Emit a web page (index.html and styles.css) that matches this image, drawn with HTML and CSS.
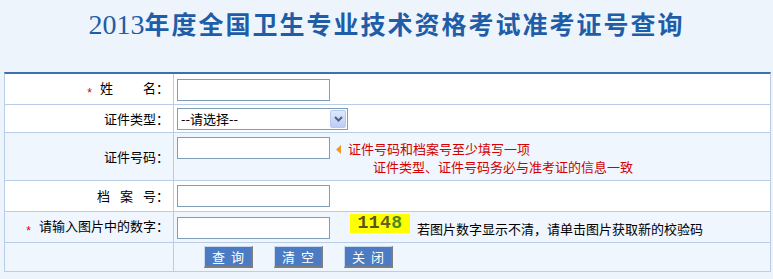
FILE: index.html
```html
<!DOCTYPE html>
<html lang="zh-CN">
<head>
<meta charset="utf-8">
<title>2013年度全国卫生专业技术资格考试准考证号查询</title>
<link rel="stylesheet" href="styles.css">
</head>
<body>
<div class="header">
  <h1 class="title"><span class="year">2013</span>年度全国卫生专业技术资格考试准考证号查询</h1>
</div>
<table class="form">
  <tr class="r1 white">
    <td class="lbl"><span class="req">*</span>姓<span class="gap-w"></span>名：</td>
    <td class="val"><div class="line"><input class="txt" type="text"></div></td>
  </tr>
  <tr class="r2 white">
    <td class="lbl">证件类型：</td>
    <td class="val">
      <div class="line">
        <div class="select">
          <span class="sel-text">--请选择--</span>
          <span class="sel-btn"><svg width="9" height="6" viewBox="0 0 9 6"><path d="M1 1 L4.5 4.5 L8 1" fill="none" stroke="#4d6185" stroke-width="2"/></svg></span>
        </div>
      </div>
    </td>
  </tr>
  <tr class="r3 light">
    <td class="lbl">证件号码：</td>
    <td class="val">
      <div class="line">
        <input class="txt" type="text">
        <div class="hint">
          <div class="hint-1"><svg class="tri" width="5" height="9" viewBox="0 0 5 9"><path d="M5 0 L0 4.5 L5 9 Z" fill="#f19a1c"/></svg><span>证件号码和档案号至少填写一项</span></div>
          <div class="hint-2">证件类型、证件号码务必与准考证的信息一致</div>
        </div>
      </div>
    </td>
  </tr>
  <tr class="r4 white">
    <td class="lbl">档<span class="gap-s"></span>案<span class="gap-s"></span>号：</td>
    <td class="val"><div class="line"><input class="txt" type="text"></div></td>
  </tr>
  <tr class="r5 light">
    <td class="lbl"><span class="req">*</span>请输入图片中的数字：</td>
    <td class="val">
      <div class="line">
        <input class="txt" type="text">
        <div class="captcha"><span class="d1">1</span><span class="d1">1</span><span class="d2">4</span><span class="d3">8</span></div>
        <span class="cap-tip">若图片数字显示不清，请单击图片获取新的校验码</span>
      </div>
    </td>
  </tr>
  <tr class="r6 light">
    <td class="lbl"></td>
    <td class="val">
      <div class="btns">
        <button class="btn" type="button">查询</button>
        <button class="btn" type="button">清空</button>
        <button class="btn" type="button">关闭</button>
      </div>
    </td>
  </tr>
</table>
</body>
</html>
```

FILE: styles.css
```css
html, body {
  margin: 0;
  padding: 0;
  background: #eef4fc;
}
body {
  font-family: "Noto Sans CJK SC", "Liberation Sans", sans-serif;
  font-size: 12px;
  color: #000;
}
.header {
  height: 72px;
  box-sizing: border-box;
  padding-top: 5px;
}
.title {
  margin: 0;
  text-align: center;
  font-size: 25px;
  line-height: 36px;
  letter-spacing: 2px;
  font-weight: 700;
  color: #1f5da6;
}
.year {
  font-family: "Liberation Serif", serif;
  font-size: 28px;
  letter-spacing: 0;
  font-weight: 400;
}
.form {
  margin-left: 4px;
  width: 767px;
  border-collapse: separate;
  border-spacing: 0;
  border-left: 1px solid #b9cce8;
  border-right: 1px solid #b9cce8;
  border-top: 2px solid #3e70b3;
}
.form td {
  border-bottom: 1px solid #b9cce8;
  box-sizing: border-box;
  padding: 0;
}
.white td { background: #fff; }
.light td { background: #f0f6fe; }
.lbl {
  width: 169px;
  border-right: 1px solid #b9cce8;
  text-align: right;
  vertical-align: middle;
  padding-right: 4px !important;
  white-space: nowrap;
  font-size: 13px;
  line-height: 16px;
}
.gap-w {
  display: inline-block;
  width: 30px;
}
.gap-s {
  display: inline-block;
  width: 10px;
}
.val {
  vertical-align: top;
  padding-left: 3px !important;
}
.r1 td { height: 31px; }
.r2 td { height: 28px; }
.r3 td { height: 48px; }
.r4 td { height: 31px; }
.r5 td { height: 31px; }
.r6 td { height: 29px; }
.r1 .val { padding-top: 5px !important; }
.r2 .val { padding-top: 3px !important; }
.r3 .val { padding-top: 4px !important; }
.r4 .val { padding-top: 4px !important; }
.r5 .val { padding-top: 5px !important; }
.r6 .val { padding-top: 3px !important; }
.req {
  display: inline-block;
  color: #d40000;
  font-family: "Liberation Sans", sans-serif;
  font-size: 12px;
  line-height: 12px;
  vertical-align: -4px;
  margin-right: 8px;
}
.line {
  display: flex;
  align-items: flex-start;
}
.txt {
  width: 153px;
  height: 22px;
  box-sizing: border-box;
  border: 1px solid #7f9db9;
  background: #fff;
  margin: 0;
  padding: 0 2px;
}
.select {
  width: 171px;
  height: 22px;
  box-sizing: border-box;
  border: 1px solid #7f9db9;
  background: #fff;
  display: flex;
  align-items: center;
  justify-content: space-between;
  padding: 0 1px 0 3px;
}
.sel-text {
  font-size: 13px;
  line-height: 16px;
}
.sel-btn {
  width: 16px;
  height: 18px;
  box-sizing: border-box;
  border: 1px solid #b7c9ef;
  border-radius: 2px;
  background: linear-gradient(#dde8fd, #bccdf4);
  display: flex;
  align-items: center;
  justify-content: center;
}
.hint {
  margin-left: 6px;
  margin-top: 3px;
  color: #d20000;
  font-size: 13px;
  line-height: 18px;
}
.hint-1 {
  display: flex;
  align-items: center;
}
.tri {
  margin-right: 7px;
}
.hint-2 {
  padding-left: 37px;
}
.captcha {
  margin-left: 20px;
  margin-top: -3px;
  width: 60px;
  height: 19px;
  background: #ffff00;
  font-family: "Liberation Mono", monospace;
  font-weight: 700;
  font-size: 18px;
  line-height: 19px;
  letter-spacing: 0.5px;
  text-align: center;
}
.d1 { color: #58561c; }
.d2 { color: #62621e; }
.d3 { color: #4a8a20; }
.cap-tip {
  margin-left: 7px;
  margin-top: 4px;
  font-size: 13px;
  line-height: 16px;
}
.btns {
  display: flex;
  gap: 21px;
  padding-left: 27px;
}
.btn {
  width: 49px;
  height: 22px;
  box-sizing: border-box;
  margin: 0;
  padding: 0 0 0 6px;
  background: #4a7bc3;
  color: #fff;
  font-family: "Noto Sans CJK SC", sans-serif;
  font-size: 13px;
  line-height: 18px;
  letter-spacing: 6px;
  text-align: center;
  border-style: solid;
  border-width: 1px 2px 2px 1px;
  border-color: #c9d8ee #7d7d7d #7d7d7d #c9d8ee;
}
```
